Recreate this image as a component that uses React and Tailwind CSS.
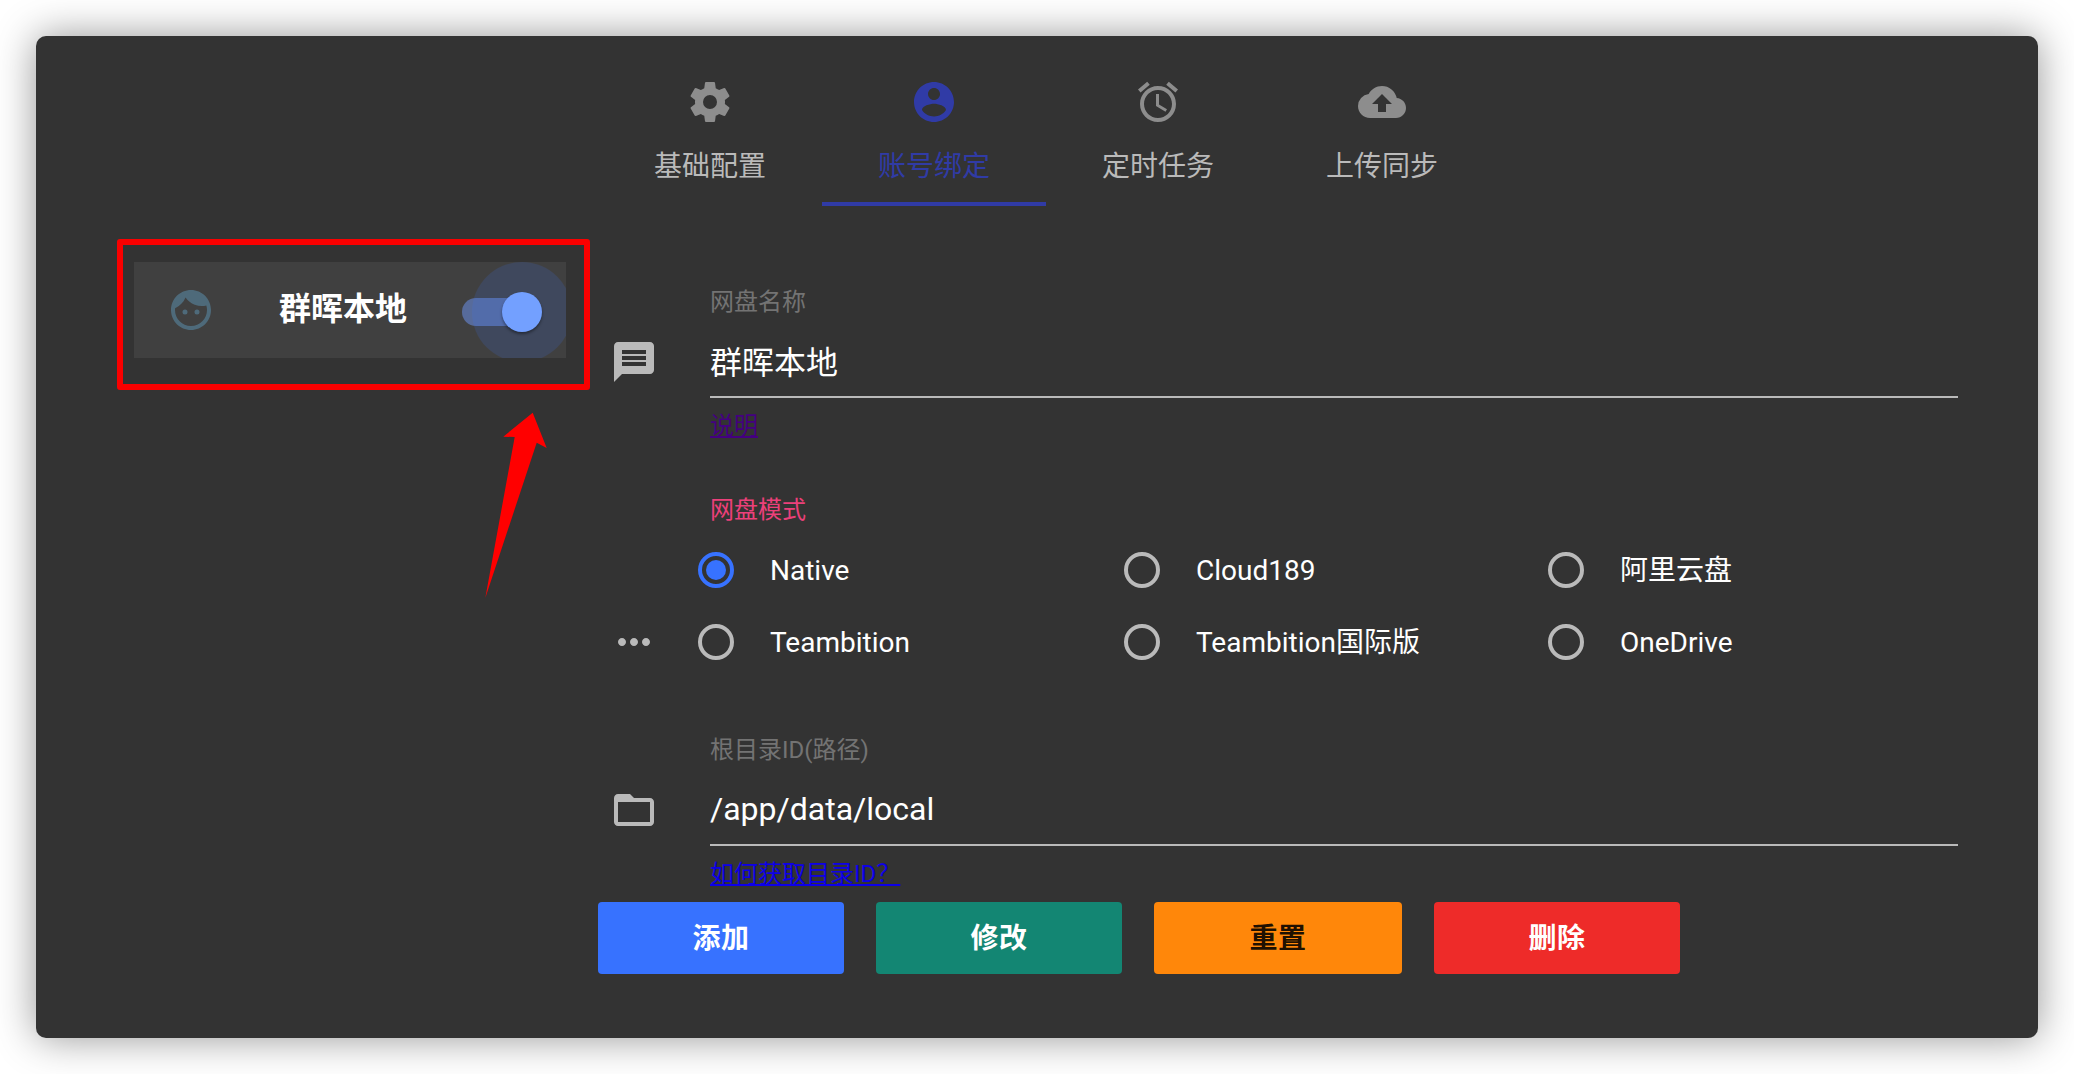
import React from "react";
import { MdAlarm, MdCloudUpload, MdFace, MdMessage, MdMoreHoriz, MdFolderOpen } from "react-icons/md";

function CogIcon({ className }) {
  return (
    <svg viewBox="0 0 24 24" fill="currentColor" className={className}>
      <path d="M12 15.5A3.5 3.5 0 0 1 8.5 12 3.5 3.5 0 0 1 12 8.5a3.5 3.5 0 0 1 3.5 3.5 3.5 3.5 0 0 1-3.5 3.5m7.43-2.53c.04-.32.07-.64.07-.97s-.03-.66-.07-1l2.11-1.63c.19-.15.24-.42.12-.64l-2-3.46c-.12-.22-.39-.31-.61-.22l-2.49 1c-.52-.39-1.06-.73-1.69-.98l-.37-2.65A.506.506 0 0 0 14 2h-4c-.25 0-.46.18-.5.42l-.37 2.65c-.63.25-1.17.59-1.69.98l-2.49-1c-.22-.09-.49 0-.61.22l-2 3.46c-.13.22-.07.49.12.64L4.57 11c-.04.34-.07.67-.07 1s.03.65.07.97l-2.11 1.66c-.19.15-.25.42-.12.64l2 3.46c.12.22.39.3.61.22l2.49-1.01c.52.4 1.06.74 1.69.99l.37 2.65c.04.24.25.42.5.42h4c.25 0 .46-.18.5-.42l.37-2.65c.63-.26 1.17-.59 1.69-.99l2.49 1.01c.22.08.49 0 .61-.22l2-3.46c.12-.22.07-.49-.12-.64z" />
    </svg>
  );
}

function AccountIcon({ className }) {
  return (
    <svg viewBox="0 0 24 24" fill="currentColor" className={className}>
      <path d="M12 2C6.48 2 2 6.48 2 12s4.48 10 10 10 10-4.48 10-10S17.52 2 12 2zm0 3c1.66 0 3 1.34 3 3s-1.34 3-3 3-3-1.34-3-3 1.34-3 3-3zm0 14.2c-2.5 0-4.71-1.28-6-3.22.03-1.99 4-3.08 6-3.08 1.99 0 5.97 1.09 6 3.08-1.29 1.94-3.5 3.22-6 3.22z" />
    </svg>
  );
}

const tabs = [
  { label: "基础配置", Icon: CogIcon },
  { label: "账号绑定", Icon: AccountIcon, active: true },
  { label: "定时任务", Icon: MdAlarm },
  { label: "上传同步", Icon: MdCloudUpload },
];

const modes = ["Native", "Cloud189", "阿里云盘", "Teambition", "Teambition国际版", "OneDrive"];

const buttons = [
  { label: "添加", style: "w-[246px] bg-[#3772ff] text-white" },
  { label: "修改", style: "w-[246px] bg-[#138673] text-white" },
  { label: "重置", style: "w-[248px] bg-[#ff870a] text-black/90" },
  { label: "删除", style: "w-[246px] bg-[#ee2b29] text-white" },
];

function Tabs() {
  return (
    <nav className="ml-[562px] flex h-[170px]">
      {tabs.map(({ label, Icon, active }) => (
        <div
          key={label}
          className={
            active
              ? "flex w-56 flex-col items-center border-b-4 border-[#303ba6] pt-[42px] text-[#303ba6]"
              : "flex w-56 flex-col items-center pt-[42px] text-[#bababa]"
          }
        >
          <Icon className={active ? "size-12" : "size-12 text-[#8d8d8d]"} />
          <span className="mt-[21px] text-[28px] leading-10">{label}</span>
        </div>
      ))}
    </nav>
  );
}

function AccountCard() {
  return (
    <div className="relative ml-[81px] mt-[33px] h-[151px] w-[473px] rounded-[3px] border-6 border-[#fa0000] pl-[11px] pt-[17px]">
      <div className="flex h-24 w-[432px] items-center overflow-hidden bg-[#404040] pl-[33px]">
        <MdFace className="size-12 text-[#4e6a7a]" />
        <span className="ml-16 pb-[2px] text-[32px] font-bold leading-[46px] text-white">群晖本地</span>
        <div className="relative ml-[55px] mt-1 h-7 w-[68px] rounded-full bg-[#576b9b]">
          <span className="absolute left-[10px] top-[-36px] size-[100px] rounded-full bg-[#3772ff]/15" />
          <span className="absolute left-10 top-[-6px] size-10 rounded-full bg-[#73a0ff] shadow-[0_2px_3px_rgba(0,0,0,0.4)]" />
        </div>
      </div>
      <svg viewBox="0 0 70 190" className="absolute left-[357px] top-[165px] h-[190px] w-[70px]" fill="#ff0000">
        <path d="M52.7 2.7L66.7 38 56.7 32.7 5.3 188 34.7 27 23.3 26.7z" />
      </svg>
    </div>
  );
}

function Field({ label, value, link, valueStyle, linkStyle, Icon }) {
  return (
    <div className="flex">
      <Icon className="ml-3 mt-[54px] size-12 shrink-0 text-[#bababa]" />
      <div className="ml-[52px] w-[1248px]">
        <div className="h-9 text-[24px] leading-9 text-[#737373]">{label}</div>
        <div className={`flex h-[78px] items-center border-b-2 border-[#bababa] text-[32px] leading-[46px] text-white ${valueStyle}`}>{value}</div>
        <a className={linkStyle}>{link}</a>
      </div>
    </div>
  );
}

function Radio({ label, checked }) {
  return (
    <div className="flex h-[72px] items-center">
      <span
        className={
          checked
            ? "flex size-9 items-center justify-center rounded-full border-4 border-[#3772ff]"
            : "size-9 rounded-full border-4 border-[#bababa]"
        }
      >
        {checked && <span className="size-5 rounded-full bg-[#3772ff]" />}
      </span>
      <span className="ml-9 pt-[2px] text-[28px] leading-[42px] text-white">{label}</span>
    </div>
  );
}

export default function App() {
  return (
    <div className="h-[1074px] w-[2074px] overflow-hidden bg-white p-9 font-['Roboto','Noto_Sans_CJK_SC',sans-serif]">
      <main className="h-[1002px] w-[2002px] rounded-[10px] bg-[#333333] shadow-[0_0_40px_rgba(0,0,0,0.42)]">
        <Tabs />
        <div className="flex">
          <aside className="w-[562px] shrink-0">
            <AccountCard />
          </aside>
          <section className="pt-[78px]">
            <Field
              label="网盘名称"
              value="群晖本地"
              link="说明"
              Icon={MdMessage}
              valueStyle="pt-[9px]"
              linkStyle="mt-[10px] inline-block text-[24px] leading-9 text-[#440080] underline"
            />
            <div className="mt-[48px] flex">
              <MdMoreHoriz className="ml-3 mt-[126px] size-12 shrink-0 text-[#bababa]" />
              <div className="ml-10">
                <div className="ml-3 h-[42px] text-[24px] leading-9 text-[#ec407a]">网盘模式</div>
                <div className="grid grid-cols-[426px_424px_410px]">
                  {modes.map((mode, i) => (
                    <Radio key={mode} label={mode} checked={i === 0} />
                  ))}
                </div>
              </div>
            </div>
            <div className="mt-[54px]">
              <Field
                label="根目录ID(路径)"
                value="/app/data/local"
                link="如何获取目录ID？"
                Icon={MdFolderOpen}
                valueStyle="pt-[5px]"
                linkStyle="mt-[10px] inline-block text-[24px] leading-9 text-[#0d00e8] underline"
              />
            </div>
            <div className="mt-[10px] flex gap-8">
              {buttons.map(({ label, style }) => (
                <button key={label} className={`h-[72px] rounded-sm pt-[2px] text-[28px] font-bold tracking-[0.5px] ${style}`}>
                  {label}
                </button>
              ))}
            </div>
          </section>
        </div>
      </main>
    </div>
  );
}
